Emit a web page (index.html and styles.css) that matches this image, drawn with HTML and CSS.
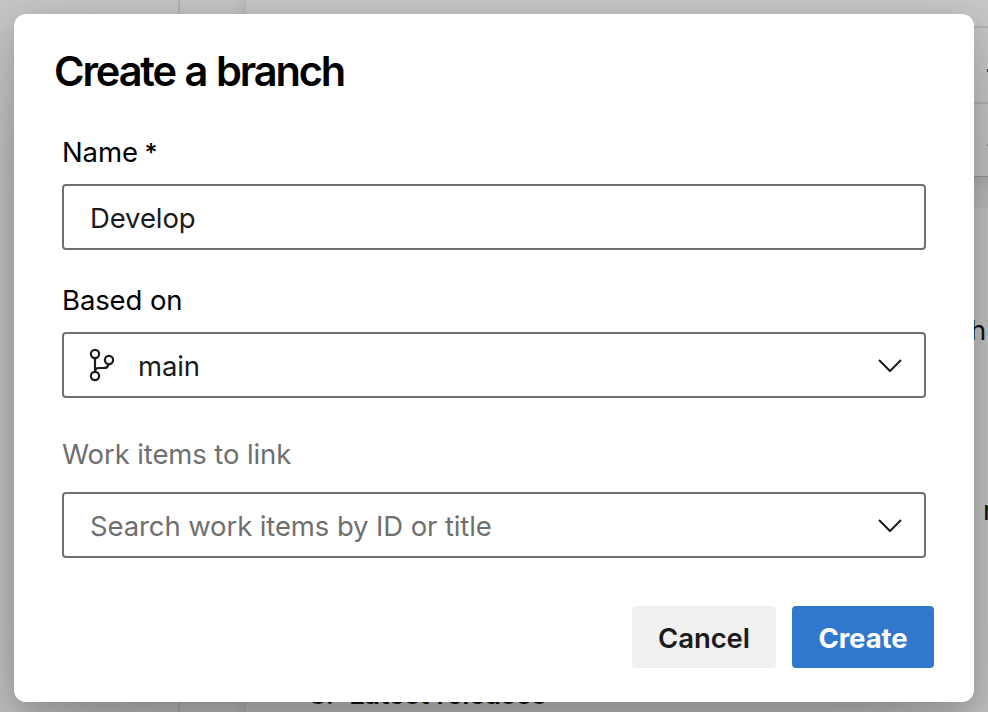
FILE: index.html
```html
<!DOCTYPE html>
<html lang="en">
<head>
<meta charset="utf-8">
<title>Create a branch</title>
<link rel="stylesheet" href="styles.css">
</head>
<body>
<div class="page">
  <div class="nav"></div>
  <div class="gutter"></div>
  <main class="content">
    <div class="topbar"></div>
    <div class="row"><i class="tick"></i></div>
    <div class="row row-last"><i class="tick tick-faint"></i></div>
    <div class="gap"></div>
    <div class="article">
      <span class="bit bit-one">hi</span>
      <span class="bit bit-two">r</span>
      <span class="item">3.&nbsp; Latest releases</span>
    </div>
  </main>
</div>
<form class="dialog" role="dialog" aria-labelledby="title">
  <h1 class="title" id="title">Create a branch</h1>
  <div class="fields">
    <label class="label">Name <span class="star">*</span></label>
    <div class="box">Develop</div>
    <label class="label based">Based on</label>
    <div class="box">
      <svg class="branch" width="28" height="36" viewBox="0 0 28 36"><g fill="none" stroke="#1b1b1b" stroke-width="2.2"><circle cx="7" cy="7" r="4.100"/><circle cx="7" cy="29" r="4.100"/><circle cx="21" cy="13" r="4.100"/><path d="M7 11v14M7 25q0-4 4-4h5q4 0 4.600-4"/></g></svg>
      <span>main</span>
      <svg class="chevron" width="24" height="16" viewBox="0 0 24 16"><path d="M1 2l11 11L23 2" fill="none" stroke="#1b1b1b" stroke-width="2"/></svg>
    </div>
    <label class="label muted work">Work items to link</label>
    <div class="box muted">
      <span>Search work items by ID or title</span>
      <svg class="chevron" width="24" height="16" viewBox="0 0 24 16"><path d="M1 2l11 11L23 2" fill="none" stroke="#1b1b1b" stroke-width="2"/></svg>
    </div>
  </div>
  <div class="actions">
    <button type="button" class="btn cancel">Cancel</button>
    <button type="button" class="btn create">Create</button>
  </div>
</form>
</body>
</html>
```
FILE: styles.css
```css
* { box-sizing: border-box; }
body {
  margin: 0;
  width: 988px;
  height: 712px;
  overflow: hidden;
  display: grid;
  font-family: Inter, "Liberation Sans", sans-serif;
  font-size: 27.5px;
  letter-spacing: -.11px;
  color: #1b1b1b;
}
.page, .dialog { grid-area: 1 / 1; }
.page {
  display: grid;
  grid-template-columns: 180px 66px 1fr;
  height: 712px;
  background: #c7c7c7;
}
.nav { border-right: 2px solid #b4b4b4; }
.gutter { background: linear-gradient(90deg, transparent 80%, rgba(0,0,0,.05)); }
.content {
  display: grid;
  grid-template-rows: 28px 76px 73px 31px 1fr;
  background: #c9c9c9;
  min-width: 0;
}
.topbar, .row { border-bottom: 2px solid #b4b4b4; }
.row {
  display: flex;
  align-items: center;
  justify-content: flex-end;
}
.row-last { border-bottom: 1px solid #999; }
.tick { width: 1px; height: 3px; margin-top: 10px; background: #444; }
.tick-faint { height: 2px; background: #999; }
.gap { background: linear-gradient(#b4b4b4, #c2c2c2 60%); }
.article { position: relative; overflow: hidden; color: #111; }
.bit, .item { position: absolute; line-height: 34px; white-space: nowrap; }
.bit-one { left: 724px; top: 105px; }
.bit-two { left: 737px; top: 285px; }
.item { left: 63px; top: 469px; font-weight: 600; letter-spacing: -.35px; word-spacing: 1px; }
.dialog {
  position: relative;
  width: 960px;
  height: 688px;
  margin: 14px;
  padding: 31px 40px 34px;
  border-radius: 12px;
  background: #fff;
  box-shadow: 0 51px 115px rgba(0,0,0,.22), 0 9.600px 28.800px rgba(0,0,0,.18);
}
.title {
  margin: 0;
  height: 52px;
  color: #000;
  font-size: 41.5px;
  line-height: 52px;
  font-weight: 630;
  letter-spacing: -2.15px;
  word-spacing: 1.5px;
  white-space: nowrap;
}
.fields { padding: 35px 8px 0; }
.label {
  display: block;
  height: 52px;
  line-height: 40px;
  color: #000;
}
.star { margin-left: -1px; font-size: 25px; font-weight: 500; }
.based { margin-top: 30px; }
.work { margin-top: 36px; height: 58px; }
.box {
  display: flex;
  align-items: center;
  height: 66px;
  padding: 2px 22px 0 26px;
  border: 2px solid #707070;
  border-radius: 4px;
  white-space: nowrap;
}
.muted { color: #6f6f6f; }
.branch { margin: -2px 22px 0 -2px; }
.chevron { margin: 0 0 0 auto; }
.actions {
  display: flex;
  justify-content: flex-end;
  gap: 16px;
  margin-top: 48px;
}
.btn {
  height: 62px;
  padding: 2px 0 0;
  border: 0;
  border-radius: 4px;
  font: 600 27.5px Inter, sans-serif;
  letter-spacing: -.1px;
}
.cancel { width: 144px; background: #f0f0f0; color: #1b1b1b; }
.create { width: 142px; background: #3078ce; color: #fff; font-weight: 680; }
.muted.label { color: #6f6f6f; }
```
